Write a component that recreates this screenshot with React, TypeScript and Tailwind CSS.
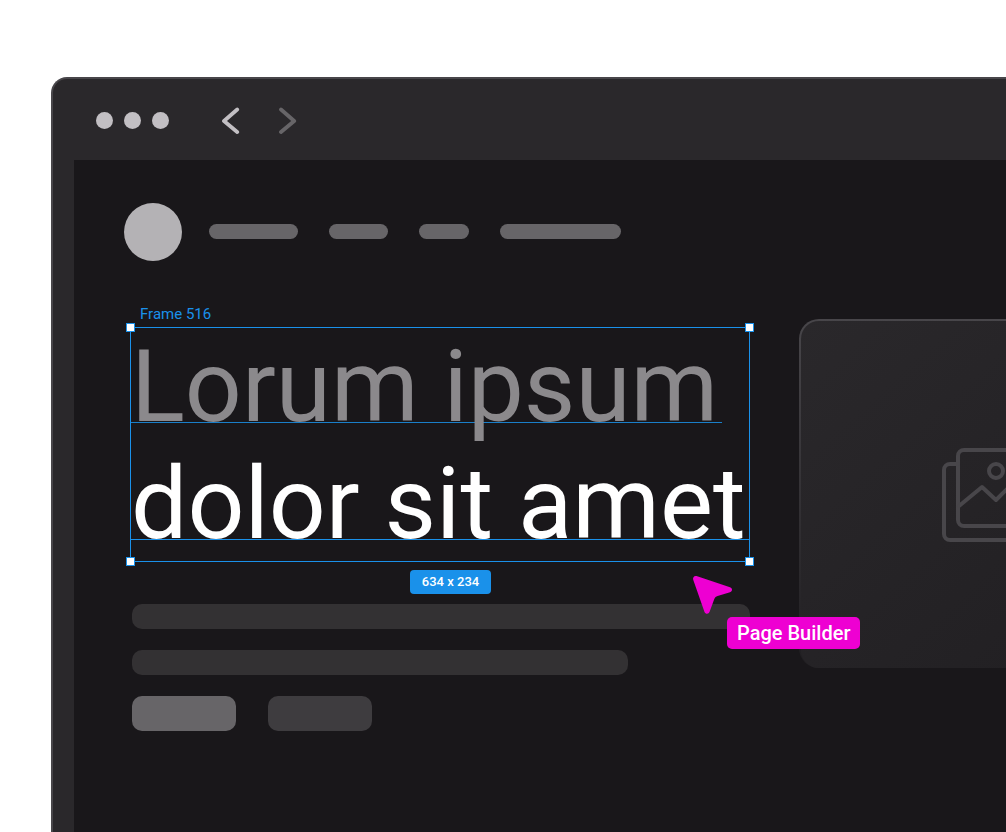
import React from "react";

const navLinks = [
  { id: "products", label: "Products", widthClass: "w-[89px]" },
  { id: "about", label: "About", widthClass: "w-[59px]" },
  { id: "blog", label: "Blog", widthClass: "w-[50px]" },
  { id: "contact", label: "Contact", widthClass: "w-[121px]" },
];

const headline = [
  { id: "line-1", text: "Lorum ipsum", textClass: "text-[#8b898c]", ruleClass: "bg-[#1a7fc9]" },
  { id: "line-2", text: "dolor sit amet", textClass: "text-white", ruleClass: "bg-[#1a91ea]" },
];

const handles = [
  { id: "top-left", posClass: "-top-[5px] -left-[5px]" },
  { id: "top-right", posClass: "-top-[5px] -right-[5px]" },
  { id: "bottom-left", posClass: "-bottom-[5px] -left-[5px]" },
  { id: "bottom-right", posClass: "-bottom-[5px] -right-[5px]" },
];

function TitleBar() {
  return (
    <header className="flex h-[81px] items-center pt-0.5 pl-[43px]">
      <div className="flex gap-[11px]">
        <span className="size-[17px] rounded-full bg-[#c2bfc3]" />
        <span className="size-[17px] rounded-full bg-[#c2bfc3]" />
        <span className="size-[17px] rounded-full bg-[#c2bfc3]" />
      </div>
      <div className="ml-[51px] flex gap-[38px]">
        <button type="button" aria-label="Back" className="text-[#c2bfc3]">
          <svg width="20" height="28" viewBox="0 0 20 28" fill="none" stroke="currentColor" strokeWidth="3.8" strokeLinecap="round" strokeLinejoin="round">
            <path d="M17.2 2.5 4 14l13.2 11" />
          </svg>
        </button>
        <button type="button" aria-label="Forward" className="text-[#676568]">
          <svg width="20" height="28" viewBox="0 0 20 28" fill="none" stroke="currentColor" strokeWidth="3.8" strokeLinecap="round" strokeLinejoin="round">
            <path d="M3 2.5 16.2 14 3 25" />
          </svg>
        </button>
      </div>
    </header>
  );
}

function SiteNav() {
  return (
    <nav className="flex items-center gap-[27px]">
      <a href="#home" aria-label="Home" className="size-[58px] rounded-full bg-[#b4b2b5]" />
      <div className="flex gap-[31px] pb-0.5">
        {navLinks.map((link) => (
          <a
            key={link.id}
            href={`#${link.id}`}
            aria-label={link.label}
            className={`h-[15px] rounded-full bg-[#676568] ${link.widthClass}`}
          />
        ))}
      </div>
    </nav>
  );
}

function SelectedFrame() {
  return (
    <div className="relative border border-[#1a91ea]">
      <h1 className="-mb-px text-[100px] leading-[117px] whitespace-nowrap">
        {headline.map((line) => (
          <span key={line.id} className={`relative block w-fit pr-1 ${line.textClass}`}>
            {/* baseline rule, drawn under the glyphs */}
            <span className={`absolute inset-x-0 top-[94px] h-px ${line.ruleClass}`} />
            <span className="relative">{line.text}</span>
          </span>
        ))}
      </h1>
      {handles.map((handle) => (
        <span key={handle.id} className={`absolute size-[9px] border border-[#1a91ea] bg-white ${handle.posClass}`} />
      ))}
      {/* collaborator cursor */}
      <div className="absolute top-[247px] left-[561px]">
        <svg width="42" height="42" viewBox="0 0 42 42" fill="#ee00d2">
          <path d="M4.5 1.1 38 12.2C40.7 13.1 40.7 16.4 38 17.2L25.6 20.9C24 21.4 22.9 22.3 22.3 23.9L17.6 36.8C16.7 39.3 13.5 39.3 12.5 36.9L1.2 4.7C.5 2.5 2.3.4 4.5 1.1Z" />
        </svg>
        <span className="absolute top-[42px] left-[35px] rounded-[5px] bg-[#ee00d2] px-2.5 text-xl leading-8 font-medium whitespace-nowrap text-white">
          Page Builder
        </span>
      </div>
    </div>
  );
}

function ImageCard() {
  return (
    <div className="mt-[15px] flex h-[349px] w-[390px] shrink-0 items-center justify-center rounded-[20px] bg-linear-to-b from-[#48464a] to-[#201e21] pt-0.5 pl-0.5">
      <div className="flex size-full items-center justify-center rounded-[18px] bg-linear-to-br from-[#2a282b] to-[#201e21]">
        <svg width="106" height="96" viewBox="0 0 106 96" fill="none" stroke="#48464a" strokeWidth="4" strokeLinecap="round" strokeLinejoin="round">
          <rect x="16" y="3" width="88" height="76" rx="6" />
          <path d="M16 17H8a6 6 0 0 0-6 6v64a6 6 0 0 0 6 6h76a6 6 0 0 0 6-6v-8" />
          <circle cx="54" cy="24" r="7" />
          <path d="m17 59 23-19 14 13 17-17 33 27" />
        </svg>
      </div>
    </div>
  );
}

export default function App() {
  return (
    <div className="flex min-h-screen overflow-hidden bg-white pt-[77px] pl-[51px] font-[Roboto,sans-serif]">
      <div className="flex min-w-0 flex-1 flex-col rounded-tl-2xl border-t-2 border-l-2 border-[#48464a] bg-[#2a282b]">
        <TitleBar />
        <main className="ml-[21px] flex-1 overflow-hidden bg-[#19171a] pt-[43px] pb-[100px] pl-[50px]">
          <SiteNav />
          <div className="mt-[43px] ml-1.5 flex items-start gap-[49px]">
            <section className="z-10 w-[620px] shrink-0">
              <p className="mb-[3px] pl-2.5 text-[15px] leading-5 text-[#1a91ea]">Frame 516</p>
              <SelectedFrame />
              <div className="mt-2 flex justify-center pl-[21px]">
                <span className="rounded bg-[#1a91ea] px-3 text-[13px] leading-6 font-medium text-white">634 x 234</span>
              </div>
              <div className="mt-2.5 flex flex-col gap-[21px] pl-0.5">
                <div className="h-[25px] rounded-[10px] bg-[#333133]" />
                <div className="h-[25px] w-[496px] rounded-[10px] bg-[#333133]" />
                <div className="flex gap-8">
                  <button type="button" aria-label="Get started" className="h-[35px] w-[104px] rounded-[10px] bg-[#676568]" />
                  <button type="button" aria-label="Learn more" className="h-[35px] w-[104px] rounded-[10px] bg-[#3e3c3f]" />
                </div>
              </div>
            </section>
            <ImageCard />
          </div>
        </main>
      </div>
    </div>
  );
}
